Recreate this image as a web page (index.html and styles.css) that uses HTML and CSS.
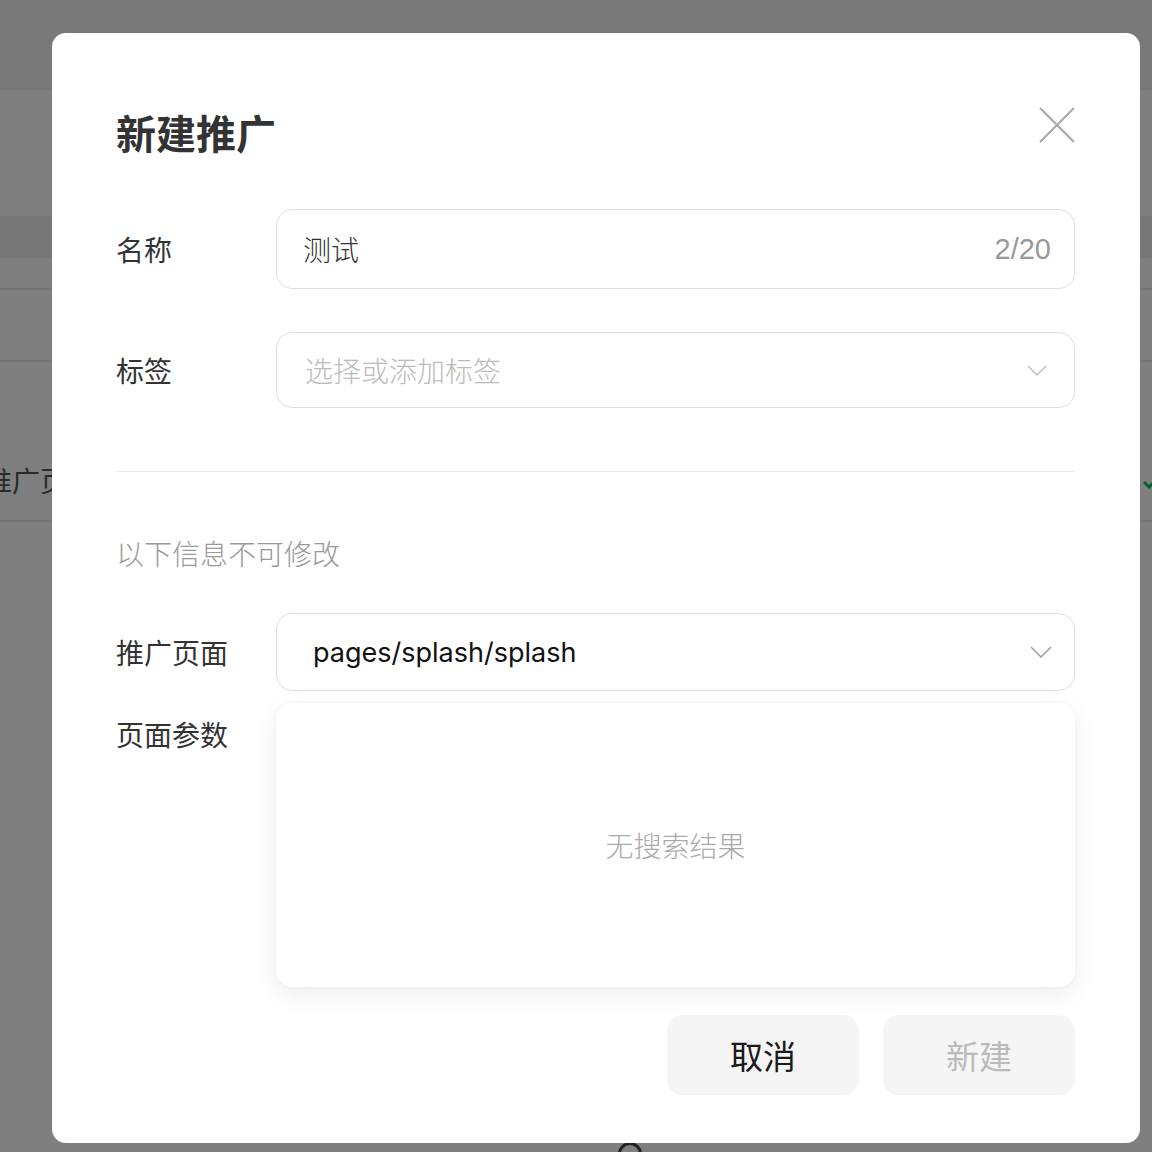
FILE: index.html
```html
<!DOCTYPE html>
<html lang="zh-CN">
<head>
<meta charset="utf-8">
<title>新建推广</title>
<link rel="stylesheet" href="styles.css">
</head>
<body>
<div class="page">
  <div class="topbar"></div>
  <div class="gap1"></div>
  <div class="band"></div>
  <div class="bgrow r1"></div>
  <div class="bgrow r2"></div>
  <div class="bgrow r3">
    <span class="bgtext">推广页面</span>
    <svg class="bgcheck" width="20" height="16" viewBox="0 0 20 16"><path d="M2 8 L7 13 L18 2" fill="none" stroke="#07c160" stroke-width="3"/></svg>
  </div>
  <div class="bgrest">
    <span class="bgcircle"></span>
  </div>
</div>
<div class="mask"></div>
<div class="modal">
  <div class="header">
    <h1 class="title">新建推广</h1>
    <svg class="close" width="36" height="36" viewBox="0 0 36 36"><path d="M1 1 L35 35 M35 1 L1 35" stroke="#aaaaaa" stroke-width="2.2" fill="none"/></svg>
  </div>
  <div class="row row-name">
    <div class="label">名称</div>
    <div class="field field-name">
      <span class="value light">测试</span>
      <span class="count">2/20</span>
    </div>
  </div>
  <div class="row row-tag">
    <div class="label">标签</div>
    <div class="field field-tag">
      <span class="placeholder">选择或添加标签</span>
      <svg class="chev" width="20" height="11" viewBox="0 0 20 11"><path d="M1 1 L10 10 L19 1" fill="none" stroke="#c4c4c4" stroke-width="1.6"/></svg>
    </div>
  </div>
  <div class="divider"></div>
  <div class="notice">以下信息不可修改</div>
  <div class="row row-page">
    <div class="label">推广页面</div>
    <div class="field field-page">
      <span class="path">pages/splash/splash</span>
      <svg class="chev" width="22" height="12" viewBox="0 0 22 12"><path d="M1 1 L11 11 L21 1" fill="none" stroke="#a0a0a0" stroke-width="1.6"/></svg>
    </div>
  </div>
  <div class="row row-params">
    <div class="label label-top">页面参数</div>
    <div class="panel">
      <span class="empty">无搜索结果</span>
    </div>
  </div>
  <div class="actions">
    <button class="btn btn-cancel">取消</button>
    <button class="btn btn-create">新建</button>
  </div>
</div>
</body>
</html>
```
FILE: styles.css
```css
* { box-sizing: border-box; }
html, body {
  margin: 0;
  padding: 0;
  width: 1152px;
  height: 1152px;
  overflow: hidden;
  font-family: Inter, "Noto Sans CJK SC", sans-serif;
  background: #ffffff;
}

/* underlying page */
.page {
  width: 1152px;
  height: 1152px;
  display: flex;
  flex-direction: column;
  background: #ffffff;
}
.topbar { height: 90px; background: #f3f3f3; border-bottom: 2px solid #eeeeee; flex: none; }
.gap1 { height: 126px; flex: none; }
.band { height: 42px; background: #efefef; flex: none; }
.bgrow { flex: none; border-bottom: 2px solid #e8e8e8; position: relative; }
.r1 { height: 32px; }
.r2 { height: 72px; }
.r3 {
  height: 160px;
  display: flex;
  align-items: flex-end;
  justify-content: space-between;
  padding-bottom: 22px;
}
.bgtext {
  margin-left: -16px;
  font-family: "Noto Sans CJK SC", sans-serif;
  font-size: 28px;
  line-height: 36px;
  color: #555555;
}
.bgcheck { margin-right: -10px; margin-bottom: 8px; }
.bgrest { flex: 1; position: relative; }
.bgcircle {
  position: absolute;
  left: 618px;
  top: 620px;
  width: 24px;
  height: 24px;
  border: 3px solid #444;
  border-radius: 50%;
}

.mask {
  position: fixed;
  inset: 0;
  background: rgba(0, 0, 0, 0.5);
}

/* modal */
.modal {
  position: fixed;
  left: 52px;
  top: 33px;
  width: 1088px;
  height: 1110px;
  background: #ffffff;
  border-radius: 14px;
  padding: 72px 65px 48px 64px;
  display: flex;
  flex-direction: column;
}
.header {
  height: 54px;
  display: flex;
  align-items: center;
  justify-content: space-between;
}
.title {
  margin: 0;
  font-family: "Noto Sans CJK SC", sans-serif;
  font-size: 40px;
  font-weight: 700;
  color: #333333;
  line-height: 54px;
}
.close { display: block; margin-top: -14px; }

.row { display: flex; align-items: center; }
.label {
  width: 160px;
  flex: none;
  font-family: "Noto Sans CJK SC", sans-serif;
  font-size: 28px;
  color: #333333;
  line-height: 36px;
}
.label-top { line-height: 62px; }
.field {
  flex: 1;
  border: 1.5px solid #dcdfe3;
  border-radius: 16px;
  display: flex;
  align-items: center;
  justify-content: space-between;
}
.row-name { margin-top: 50px; }
.field-name { height: 80px; padding: 0 23px 0 26px; }
.value {
  font-family: "Noto Sans CJK SC", sans-serif;
  font-size: 28px;
  color: #333333;
}
.light { font-weight: 300; }
.count {
  font-family: "Liberation Sans", Inter, sans-serif;
  font-size: 29px;
  color: #999999;
}
.row-tag { margin-top: 43px; }
.field-tag { height: 76px; padding: 0 27px 0 28px; }
.placeholder {
  font-family: "Noto Sans CJK SC", sans-serif;
  font-size: 28px;
  font-weight: 300;
  color: #bbbbbb;
}
.chev { display: block; }
.divider { margin-top: 63px; height: 1.5px; background: #ececec; }
.notice {
  margin-top: 63px;
  font-family: "Noto Sans CJK SC", sans-serif;
  font-size: 28px;
  line-height: 36px;
  color: #999999;
  font-weight: 300;
}
.row-page { margin-top: 42px; }
.field-page { height: 78px; padding: 0 22px 0 36px; }
.path {
  font-family: Inter, sans-serif;
  font-size: 27px;
  color: #111111;
}
.row-params { margin-top: 12px; align-items: flex-start; }
.panel {
  flex: 1;
  height: 284px;
  border-radius: 16px;
  background: #ffffff;
  box-shadow: 0 8px 24px rgba(0, 0, 0, 0.07), 0 0 6px rgba(0, 0, 0, 0.03);
  display: flex;
  align-items: center;
  justify-content: center;
}
.empty {
  font-family: "Noto Sans CJK SC", sans-serif;
  font-size: 28px;
  font-weight: 300;
  color: #aaaaaa;
}
.actions {
  margin-top: 28px;
  display: flex;
  justify-content: flex-end;
  gap: 24px;
}
.btn {
  width: 192px;
  height: 80px;
  border: none;
  border-radius: 16px;
  background: #f5f5f5;
  font-family: "Noto Sans CJK SC", sans-serif;
  font-size: 33px;
  font-weight: 400;
  padding: 0;
}
.btn-cancel { color: #1a1a1a; }
.btn-create { color: #bbbbbb; }
```
